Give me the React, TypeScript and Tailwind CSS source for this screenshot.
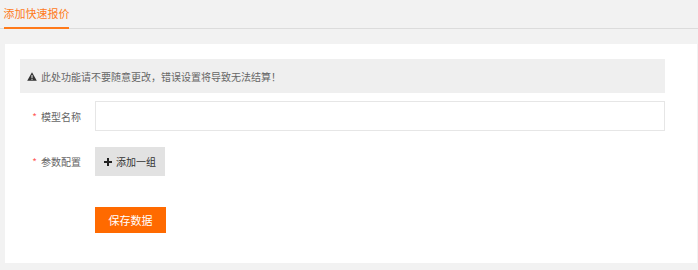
import React from "react";

export default function App() {
  return (
    <div
      className="w-[698px] h-[270px] bg-[#f2f2f2] overflow-hidden text-[10px]"
      style={{ fontFamily: '"Noto Sans CJK SC", "Noto Sans", sans-serif' }}
    >
      <div className="h-[29px] border-b border-[#dcdcdc] flex items-end">
        <div className="ml-[4px] w-[65px] h-[29px] border-b-2 border-[#ff7a1a] -mb-px flex items-center justify-center text-[#ff7a1a] text-[11px] leading-none whitespace-nowrap">
          添加快速报价
        </div>
      </div>
      <div className="mt-[15px] ml-[5px] mr-[1px] h-[219px] bg-white pl-[15px] pr-[32px] pt-[15px]">
        <div className="h-[34px] bg-[#efefef] flex items-center pl-[7px] text-[#666] whitespace-nowrap">
          <svg width="10" height="9" viewBox="0 0 10 9" className="mr-[4px]">
            <path d="M5 0.2 L9.8 8.8 L0.2 8.8 Z" fill="#333" />
            <rect x="4.5" y="3" width="1" height="3.2" fill="#efefef" />
            <rect x="4.5" y="6.9" width="1" height="1" fill="#efefef" />
          </svg>
          <span>此处功能请不要随意更改，错误设置将导致无法结算！</span>
        </div>
        <div className="flex items-center mt-[8px]">
          <div className="w-[75px] flex justify-end pr-[14px] text-[#666] whitespace-nowrap">
            <span className="text-[#ff5c5c] mr-[4px]">*</span>模型名称
          </div>
          <input className="flex-1 h-[30px] border border-[#e6e6e6] outline-none px-2" />
        </div>
        <div className="flex items-center mt-[16px]">
          <div className="w-[75px] flex justify-end pr-[14px] text-[#666] whitespace-nowrap">
            <span className="text-[#ff5c5c] mr-[4px]">*</span>参数配置
          </div>
          <button className="w-[70px] h-[29px] bg-[#e2e2e2] flex items-center justify-center text-[#333] whitespace-nowrap">
            <svg width="8" height="8" viewBox="0 0 8 8" className="mr-[4px]">
              <rect x="3" y="0" width="2" height="8" fill="#222" />
              <rect x="0" y="3" width="8" height="2" fill="#222" />
            </svg>
            添加一组
          </button>
        </div>
        <div className="flex mt-[31px]">
          <div className="w-[75px]" />
          <button className="w-[71px] h-[26px] bg-[#ff6a00] text-white text-[11px] flex items-center justify-center whitespace-nowrap">
            保存数据
          </button>
        </div>
      </div>
    </div>
  );
}
